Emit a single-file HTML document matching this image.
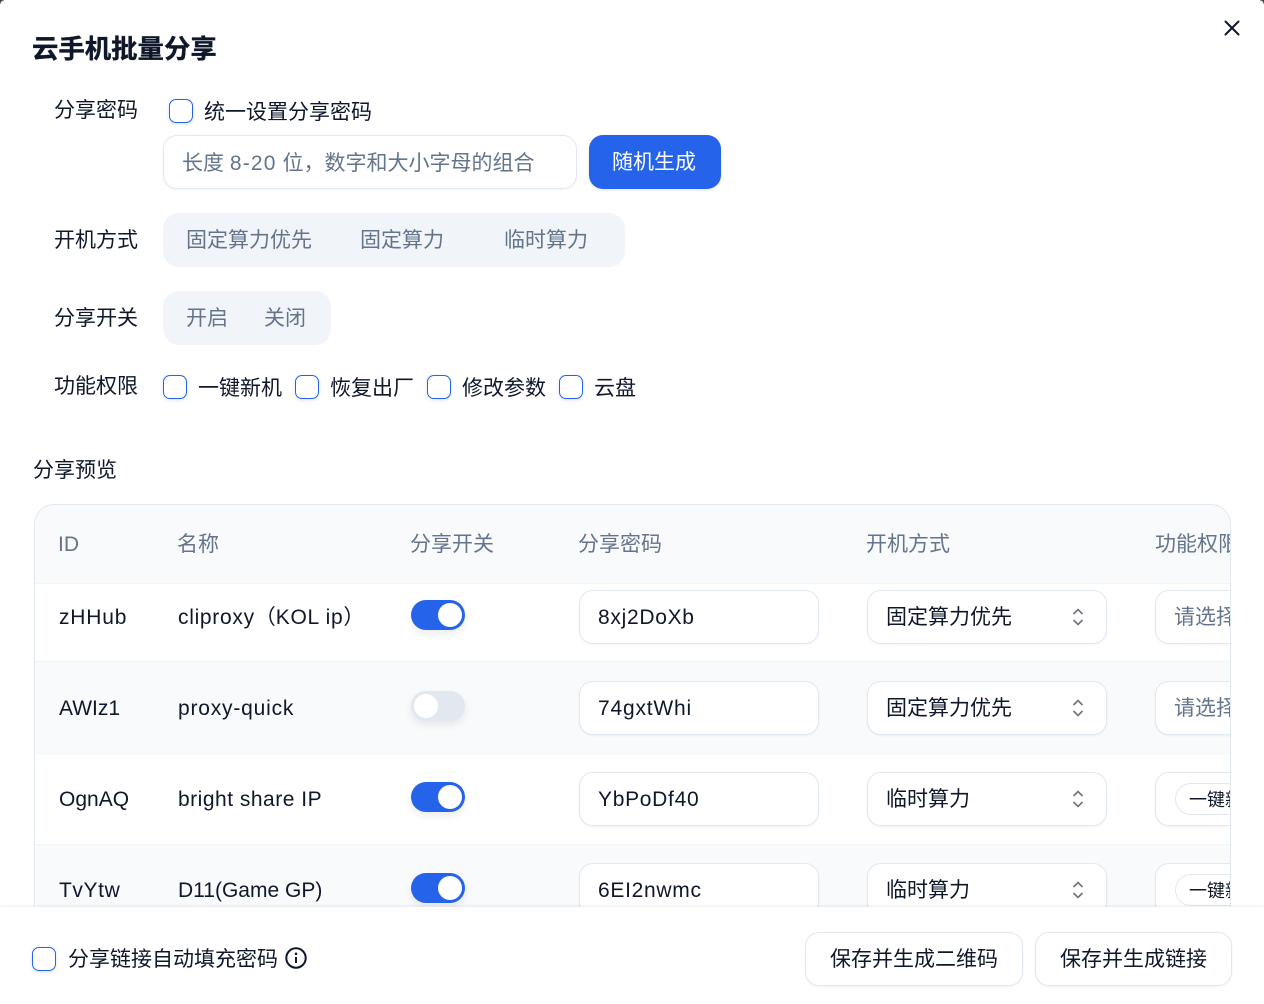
<!DOCTYPE html>
<html lang="zh-CN"><head><meta charset="utf-8"><title>云手机批量分享</title>
<style>
*{box-sizing:border-box;margin:0;padding:0}
html,body{width:1264px;height:1004px;overflow:hidden;background:#fff}
body{position:relative;font-family:"Liberation Sans","WenQuanYi Zen Hei","Noto Sans CJK SC",sans-serif;color:#0f172a;font-size:21px}
.t{position:absolute;white-space:nowrap;line-height:30px;height:30px;margin-top:1px}
.l{letter-spacing:.7px}
.g{color:#64748b}
.cb{position:absolute;width:24px;height:24px;border:1.5px solid #2563eb;border-radius:7px;background:#fff;box-shadow:0 1px 3px rgba(37,99,235,.2)}
.box{position:absolute;background:#fff;border:1px solid #e2e8f0;border-radius:14px;box-shadow:0 1px 2px rgba(15,23,42,.05)}
.seg{position:absolute;background:#f1f5f9;border-radius:16px;height:54px;top:0}
.sw{position:absolute;width:54px;height:30px;border-radius:15px;background:#2563eb;box-shadow:0 4px 8px rgba(15,23,42,.08)}
.sw i{position:absolute;top:3px;left:27px;width:24px;height:24px;border-radius:50%;background:#fff}
.sw.off{background:#e2e8f0}.sw.off i{left:3px}
.row{position:absolute;left:0;width:1196px;border-top:1px solid #f1f5f9}
.ch{position:absolute;width:14px;height:20px}
#wrap{position:absolute;left:34px;top:504px;width:1197px;height:403px;border:1px solid #e2e8f0;border-bottom:0;border-radius:20px 20px 0 0;overflow:hidden;background:#fff}
#footer{position:absolute;left:0;top:907px;width:1264px;height:97px;background:#fff;box-shadow:0 -1px 3px rgba(15,23,42,.08)}
.tag{position:absolute;left:1140px;height:32px;width:90px;border:1px solid #e2e8f0;border-radius:16px;background:#fff}
</style></head><body>
<div style="position:absolute;left:0;top:0;width:4px;height:4px;background:radial-gradient(circle at 100% 100%,transparent 3px,#444 4px)"></div>
<div style="position:absolute;right:0;top:0;width:4px;height:4px;background:radial-gradient(circle at 0 100%,transparent 3px,#444 4px)"></div>

<div class="t" style="left:32px;top:33px;font-size:26.4px;font-weight:700;-webkit-text-stroke:.35px #0f172a">云手机批量分享</div>
<svg style="position:absolute;left:1222px;top:18px" width="20" height="20" viewBox="0 0 20 20"><path d="M3.5 3.5L16.5 16.5M16.5 3.5L3.5 16.5" stroke="#0f172a" stroke-width="2" stroke-linecap="round" fill="none"/></svg>

<div class="t" style="left:54px;top:95px">分享密码</div>
<div class="cb" style="left:169px;top:99px"></div>
<div class="t" style="left:204px;top:97px">统一设置分享密码</div>
<div class="box" style="left:163px;top:135px;width:414px;height:54px"></div>
<div class="t g" style="left:182px;top:148px">长度 <span style="letter-spacing:1.2px">8-20</span> 位，数字和大小字母的组合</div>
<div style="position:absolute;left:589px;top:135px;width:132px;height:54px;border-radius:14px;background:#2563eb;box-shadow:0 1px 3px rgba(15,23,42,.12)"></div>
<div class="t" style="left:612px;top:147px;color:#fff">随机生成</div>

<div class="t" style="left:54px;top:225px">开机方式</div>
<div class="seg" style="left:163px;top:213px;width:462px"></div>
<div class="t g" style="left:186px;top:225px">固定算力优先</div>
<div class="t g" style="left:360px;top:225px">固定算力</div>
<div class="t g" style="left:504px;top:225px">临时算力</div>

<div class="t" style="left:54px;top:303px">分享开关</div>
<div class="seg" style="left:163px;top:291px;width:168px"></div>
<div class="t g" style="left:186px;top:303px">开启</div>
<div class="t g" style="left:264px;top:303px">关闭</div>

<div class="t" style="left:54px;top:371px">功能权限</div>
<div class="cb" style="left:163px;top:375px"></div>
<div class="t" style="left:198px;top:373px">一键新机</div>
<div class="cb" style="left:295px;top:375px"></div>
<div class="t" style="left:330px;top:373px">恢复出厂</div>
<div class="cb" style="left:427px;top:375px"></div>
<div class="t" style="left:462px;top:373px">修改参数</div>
<div class="cb" style="left:559px;top:375px"></div>
<div class="t" style="left:594px;top:373px">云盘</div>

<div class="t" style="left:33px;top:455px">分享预览</div>

<div id="wrap">
  <div style="position:absolute;left:0;top:0;width:1196px;height:78px;background:#f9fafb"></div>
  <div class="row" style="top:78px;height:78px;background:#fff"></div>
  <div class="row" style="top:156px;height:92px;background:#f8fafc"></div>
  <div class="row" style="top:248px;height:91px;background:#fff"></div>
  <div class="row" style="top:339px;height:64px;background:#f8fafc"></div>

  <div class="t g" style="left:23px;top:24px">ID</div>
  <div class="t g" style="left:142px;top:24px">名称</div>
  <div class="t g" style="left:375px;top:24px">分享开关</div>
  <div class="t g" style="left:543px;top:24px">分享密码</div>
  <div class="t g" style="left:831px;top:24px">开机方式</div>
  <div class="t g" style="left:1120px;top:24px">功能权限</div>

  <div class="t" style="left:24px;top:97px;letter-spacing:.8px">zHHub</div>
  <div class="t" style="left:143px;top:97px"><span class="l">cliproxy</span>（<span class="l">KOL ip</span>）</div>
  <div class="sw" style="left:376px;top:95px"><i></i></div>
  <div class="box" style="left:544px;top:85px;width:240px;height:54px"></div>
  <div class="t l" style="left:563px;top:97px">8xj2DoXb</div>
  <div class="box" style="left:832px;top:85px;width:240px;height:54px"></div>
  <div class="t" style="left:851px;top:97px">固定算力优先</div>
  <svg class="ch" style="left:1035.5px;top:102px" viewBox="0 0 14 20"><path d="M2.5 7L7 2.5L11.5 7M2.5 13L7 17.5L11.5 13" stroke="#71717a" stroke-width="1.6" fill="none"/></svg>
  <div class="box" style="left:1120px;top:85px;width:120px;height:54px"></div>
  <div class="t g" style="left:1139px;top:97px">请选择</div>

  <div class="t" style="left:24px;top:188px">AWIz1</div>
  <div class="t" style="left:143px;top:188px;letter-spacing:.8px">proxy-quick</div>
  <div class="sw off" style="left:376px;top:186px"><i></i></div>
  <div class="box" style="left:544px;top:176px;width:240px;height:54px"></div>
  <div class="t" style="left:563px;top:188px;letter-spacing:.8px">74gxtWhi</div>
  <div class="box" style="left:832px;top:176px;width:240px;height:54px"></div>
  <div class="t" style="left:851px;top:188px">固定算力优先</div>
  <svg class="ch" style="left:1035.5px;top:193px" viewBox="0 0 14 20"><path d="M2.5 7L7 2.5L11.5 7M2.5 13L7 17.5L11.5 13" stroke="#71717a" stroke-width="1.6" fill="none"/></svg>
  <div class="box" style="left:1120px;top:176px;width:120px;height:54px"></div>
  <div class="t g" style="left:1139px;top:188px">请选择</div>

  <div class="t" style="left:24px;top:279px">OgnAQ</div>
  <div class="t" style="left:143px;top:279px;letter-spacing:.5px">bright share IP</div>
  <div class="sw" style="left:376px;top:277px"><i></i></div>
  <div class="box" style="left:544px;top:267px;width:240px;height:54px"></div>
  <div class="t l" style="left:563px;top:279px">YbPoDf40</div>
  <div class="box" style="left:832px;top:267px;width:240px;height:54px"></div>
  <div class="t" style="left:851px;top:279px">临时算力</div>
  <svg class="ch" style="left:1035.5px;top:284px" viewBox="0 0 14 20"><path d="M2.5 7L7 2.5L11.5 7M2.5 13L7 17.5L11.5 13" stroke="#71717a" stroke-width="1.6" fill="none"/></svg>
  <div class="box" style="left:1120px;top:267px;width:120px;height:54px"></div>
  <div class="tag" style="top:278px"></div>
  <div class="t" style="left:1154px;top:279px;font-size:18px">一键新机</div>

  <div class="t" style="left:24px;top:370px;letter-spacing:.6px">TvYtw</div>
  <div class="t" style="left:143px;top:370px">D11(Game GP)</div>
  <div class="sw" style="left:376px;top:368px"><i></i></div>
  <div class="box" style="left:544px;top:358px;width:240px;height:54px"></div>
  <div class="t l" style="left:563px;top:370px">6EI2nwmc</div>
  <div class="box" style="left:832px;top:358px;width:240px;height:54px"></div>
  <div class="t" style="left:851px;top:370px">临时算力</div>
  <svg class="ch" style="left:1035.5px;top:375px" viewBox="0 0 14 20"><path d="M2.5 7L7 2.5L11.5 7M2.5 13L7 17.5L11.5 13" stroke="#71717a" stroke-width="1.6" fill="none"/></svg>
  <div class="box" style="left:1120px;top:358px;width:120px;height:54px"></div>
  <div class="tag" style="top:369px"></div>
  <div class="t" style="left:1154px;top:370px;font-size:18px">一键新机</div>
</div>

<div id="footer">
  <div class="cb" style="left:32px;top:40px"></div>
  <div class="t" style="left:68px;top:37px">分享链接自动填充密码</div>
  <svg style="position:absolute;left:285px;top:40px" width="22" height="22" viewBox="0 0 22 22"><circle cx="11" cy="11" r="9.7" stroke="#0f172a" stroke-width="2" fill="none"/><path d="M11 10V16" stroke="#0f172a" stroke-width="2" fill="none"/><circle cx="11" cy="6.8" r="1.3" fill="#0f172a"/></svg>
  <div class="box" style="left:805px;top:25px;width:218px;height:54px"></div>
  <div class="t" style="left:830px;top:37px">保存并生成二维码</div>
  <div class="box" style="left:1035px;top:25px;width:197px;height:54px"></div>
  <div class="t" style="left:1060px;top:37px">保存并生成链接</div>
</div>
</body></html>
